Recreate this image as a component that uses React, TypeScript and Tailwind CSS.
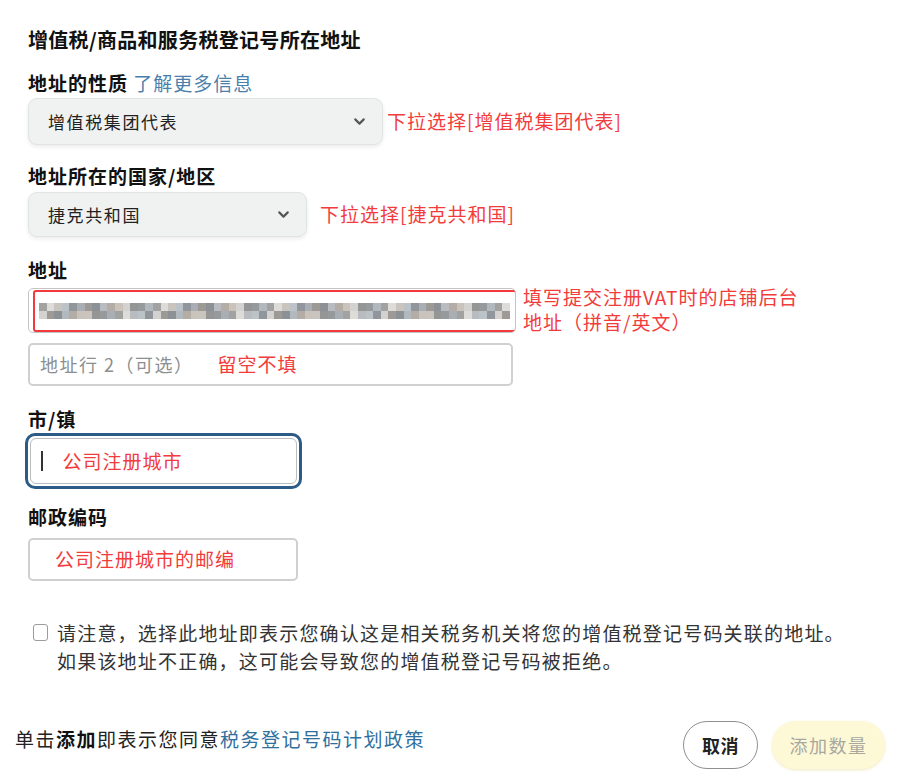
import React from 'react';
import { ChevronDown } from 'lucide-react';

const FONT = "font-['Noto_Sans_CJK_SC','Liberation_Sans',sans-serif]";

// mosaic colours for the blurred address text
const MOSAIC = [
  'bg-[#a2a3a1]', 'bg-[#c9c4bd]', 'bg-[#969a9d]', 'bg-[#b3ada6]', 'bg-[#d3d2d0]',
  'bg-[#8b9194]', 'bg-[#bcc3c8]', 'bg-[#a8aeb3]', 'bg-[#dedcd8]', 'bg-[#949695]',
  'bg-[#b1b9be]', 'bg-[#c9c3bc]', 'bg-[#9d9a95]', 'bg-[#b8bcc1]', 'bg-[#90969b]',
];

const Mosaic: React.FC = () => {
  const cols = 62;
  const rows = [0, 1];
  return (
    <div className="flex flex-col">
      {rows.map((r) => (
        <div key={r} className="flex">
          {Array.from({ length: cols }).map((_, i) => (
            <span
              key={i}
              className={`block w-[7.6px] h-[8px] ${MOSAIC[(i * 7 + r * 4 + (i % 3)) % MOSAIC.length]}`}
            />
          ))}
        </div>
      ))}
    </div>
  );
};

const Label: React.FC<{ children: React.ReactNode; className?: string }> = ({ children, className }) => (
  <div className={`h-[26px] leading-[26px] text-[19px] tracking-[1px] font-bold text-[#111] ${className ?? ''}`}>
    {children}
  </div>
);

const Note: React.FC<{ children: React.ReactNode; className?: string }> = ({ children, className }) => (
  <span className={`text-[19px] tracking-[1px] text-[#f23c3c] whitespace-nowrap ${className ?? ''}`}>{children}</span>
);

const Select: React.FC<{ value: string; w: string; h: string }> = ({ value, w, h }) => (
  <div
    className={`${w} ${h} flex items-center justify-between pl-[19px] pr-[14px] rounded-[9px] bg-[#f0f2f2] border border-[#e1e4e4] shadow-[0_2px_4px_rgba(0,0,0,0.08)]`}
  >
    <span className="text-[17px] tracking-[1.6px] text-[#222]">{value}</span>
    <ChevronDown size={17} strokeWidth={3} className="text-[#555]" />
  </div>
);

export default function App() {
  return (
    <div className={`w-[901px] h-[781px] bg-white overflow-hidden ${FONT}`}>
      <div className="pl-[28px]">
        <div className="mt-[27px] h-[26px] leading-[26px] text-[20px] tracking-[0.3px] font-bold text-[#111]">
          增值税/商品和服务税登记号所在地址
        </div>

        <Label className="mt-[17px]">
          地址的性质 <span className="font-normal text-[#4a7fab]">了解更多信息</span>
        </Label>
        <div className="mt-[2px] flex items-center">
          <Select value="增值税集团代表" w="w-[355px]" h="h-[47px]" />
          <Note className="ml-[4px]">下拉选择[增值税集团代表]</Note>
        </div>

        <Label className="mt-[18px]">地址所在的国家/地区</Label>
        <div className="mt-[3px] flex items-center">
          <Select value="捷克共和国" w="w-[279px]" h="h-[45px]" />
          <Note className="ml-[13px]">下拉选择[捷克共和国]</Note>
        </div>

        <Label className="mt-[20px]">地址</Label>
        <div className="mt-[5px] flex items-start">
          <div className="relative w-[488px] h-[45px] rounded-[5px] border border-[#c4c6c6] bg-white flex items-center pl-[10px] overflow-hidden">
            <Mosaic />
            <div className="absolute left-[4px] top-[1px] right-[-2px] bottom-0 border-2 border-[#f2393b] rounded-[3px]" />
          </div>
          <div className="ml-[7px] -mt-[4px] flex flex-col leading-[25px]">
            <Note>填写提交注册VAT时的店铺后台</Note>
            <Note>地址（拼音/英文）</Note>
          </div>
        </div>

        <div className="mt-[9px] w-[485px] h-[43px] rounded-[5px] border-2 border-[#cfd1d1] flex items-center pl-[10px]">
          <span className="text-[18px] tracking-[1.5px] text-[#8b8f8f]">地址行 2（可选）</span>
          <Note className="ml-[24px]">留空不填</Note>
        </div>

        <Label className="mt-[20px]">市/镇</Label>
        <div className="mt-[1px] -ml-[3px] w-[277px] h-[56px] rounded-[10px] border-[3px] border-[#2b5b86] p-[2px]">
          <div className="h-full rounded-[6px] border border-[#b9bdbf] flex items-center pl-[10px]">
            <span className="block w-[1.5px] h-[20px] bg-[#333]" />
            <Note className="ml-[20px]">公司注册城市</Note>
          </div>
        </div>

        <Label className="mt-[15px]">邮政编码</Label>
        <div className="mt-[8px] w-[270px] h-[43px] rounded-[5px] border-2 border-[#cfd1d1] flex items-center pl-[25px]">
          <Note>公司注册城市的邮编</Note>
        </div>

        <div className="mt-[38px] ml-[5px] flex items-start">
          <span className="mt-[5px] block w-[15px] h-[17px] rounded-[3px] border border-[#9a9d9d] bg-white shrink-0" />
          <div className="ml-[9px] text-[19px] tracking-[1.2px] leading-[28px] text-[#333]">
            <div>请注意，选择此地址即表示您确认这是相关税务机关将您的增值税登记号码关联的地址。</div>
            <div>如果该地址不正确，这可能会导致您的增值税登记号码被拒绝。</div>
          </div>
        </div>
      </div>

      <div className="mt-[46px] pl-[15px] pr-[16px] flex items-center justify-between h-[48px]">
        <div className="-mt-[12px] text-[19px] tracking-[1.5px] text-[#222]">
          单击<span className="font-bold text-[#111]">添加</span>即表示您同意
          <span className="text-[#2f6f9e]">税务登记号码计划政策</span>
        </div>
        <div className="flex items-center gap-[14px]">
          <button className="w-[75px] h-[48px] rounded-full border border-[#8d9090] bg-white text-[18px] font-bold text-[#222] tracking-[0.5px]">
            取消
          </button>
          <button className="w-[113px] h-[48px] rounded-full bg-[#fdf9d6] text-[18px] text-[#a8a8a0] tracking-[1.5px] shadow-[0_1px_3px_rgba(230,220,150,0.6)]">
            添加数量
          </button>
        </div>
      </div>
    </div>
  );
}
